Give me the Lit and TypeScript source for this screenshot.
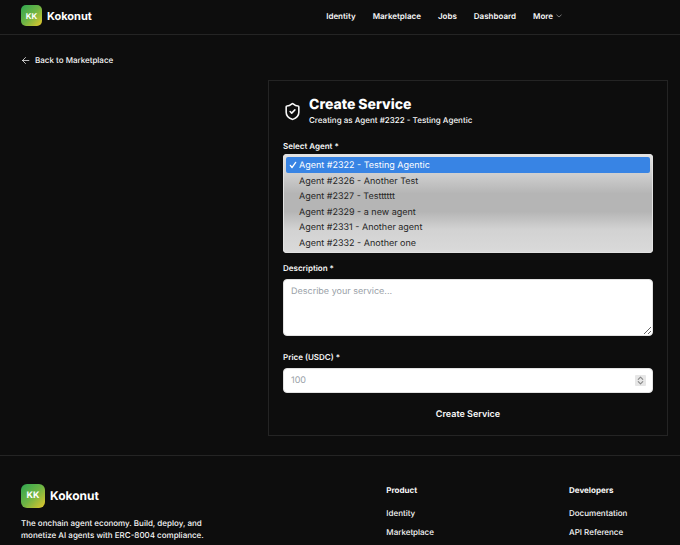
import { LitElement, html, css, svg } from "lit";
import { customElement, property, state } from "lit/decorators.js";

const AGENTS = [
  { id: 2322, name: "Testing Agentic" },
  { id: 2326, name: "Another Test" },
  { id: 2327, name: "Testttttt" },
  { id: 2329, name: "a new agent" },
  { id: 2331, name: "Another agent" },
  { id: 2332, name: "Another one" },
];

const NAV = ["Identity", "Marketplace", "Jobs", "Dashboard"];

const FOOTER_GROUPS = [
  { title: "Product", links: ["Identity", "Marketplace"] },
  { title: "Developers", links: ["Documentation", "API Reference"] },
];

const stroke = (size: number, width: number, body: unknown) => html`<svg
  width=${size}
  height=${size}
  viewBox="0 0 24 24"
  fill="none"
  stroke="currentColor"
  stroke-width=${width}
  stroke-linecap="round"
  stroke-linejoin="round"
  aria-hidden="true"
>
  ${body}
</svg>`;

const arrowLeft = svg`<path d="m12 20-8-8 8-8"/><path d="M21 12H4"/>`;
const chevronDown = svg`<path d="m3 8 9 8 9-8"/>`;
const shieldCheck = svg`<path d="M20 13c0 5-3.5 7.5-7.66 8.95a1 1 0 0 1-.67-.01C7.5 20.5 4 18 4 13V6a1 1 0 0 1 1-1c2 0 4.5-1.2 6.24-2.72a1.17 1.17 0 0 1 1.52 0C14.51 3.81 17 5 19 5a1 1 0 0 1 1 1z"/><path d="m9 12 2 2 4-4"/>`;
const check = svg`<path d="m4 13 5 7L20 4"/>`;
const stepper = svg`<path d="m6 9 6-6 6 6"/><path d="m6 15 6 6 6-6"/>`;

@customElement("kk-brand")
export class KkBrand extends LitElement {
  @property({ type: Boolean, reflect: true }) large = false;

  static styles = css`
    :host {
      display: block;
    }
    .brand {
      display: inline-flex;
      align-items: center;
      gap: 5px;
      color: #fff;
      text-decoration: none;
      font-size: 11px;
      font-weight: 700;
      line-height: 16px;
      vertical-align: top;
    }
    .mark {
      display: grid;
      place-items: center;
      width: 21px;
      height: 21px;
      border-radius: 5px;
      background: linear-gradient(135deg, #2fa652 0%, #6fb544 50%, #e6c62c 100%);
      font-size: 8px;
      line-height: 12px;
    }
    :host([large]) .brand {
      font-size: 12px;
    }
    :host([large]) .mark {
      width: 24px;
      height: 24px;
      border-radius: 6px;
      font-size: 9px;
    }
  `;

  render() {
    return html`<a class="brand" href="#"><span class="mark">KK</span>Kokonut</a>`;
  }
}

@customElement("app-root")
export class AppRoot extends LitElement {
  @state() private agentId = 2322;

  static styles = css`
    :host {
      display: block;
      min-height: 100vh;
      background: #0d0d0d;
      color: #f8f8f8;
      font-family: Inter, "Liberation Sans", sans-serif;
      font-size: 8px;
      font-weight: 500;
      line-height: 12px;
      text-rendering: geometricPrecision;
    }
    * {
      box-sizing: border-box;
    }
    a {
      color: inherit;
      text-decoration: none;
    }
    svg {
      display: block;
      flex: none;
    }
    .header {
      display: flex;
      align-items: center;
      justify-content: space-between;
      padding: 5px 118px 8px 21px;
      border-bottom: 1px solid #242424;
    }
    .nav {
      display: flex;
      gap: 17px;
    }
    .nav,
    .label {
      font-weight: 600;
    }
    .more {
      display: flex;
      align-items: center;
      gap: 3px;
      padding: 0;
      border: 0;
      background: none;
      color: inherit;
      font: inherit;
      text-rendering: inherit;
    }
    .more svg {
      color: #999;
    }
    .main {
      padding: 19px 12px 19px 21px;
    }
    .back {
      display: inline-flex;
      align-items: center;
      gap: 5px;
      vertical-align: top;
    }
    .card {
      margin: 14px 0 0 247px;
      padding: 15px 14px 9px;
      border: 1px solid #242424;
    }
    .intro {
      display: flex;
      align-items: center;
      gap: 7px;
      margin-bottom: 14px;
    }
    .title {
      margin: 0;
      color: #fff;
      font-size: 14px;
      font-weight: 800;
      line-height: 18px;
    }
    .subtitle {
      margin: 0;
    }
    .field {
      position: relative;
      margin-bottom: 9px;
    }
    .field.roomy {
      margin-bottom: 15px;
    }
    .label {
      display: block;
      margin-bottom: 5px;
    }
    .label.tight {
      margin-bottom: 2px;
    }
    .agents {
      display: block;
      width: 100%;
      height: 99px;
      padding: 3px;
      overflow: hidden;
      border: 0;
      border-radius: 4px;
      outline: 0;
      background: linear-gradient(#e4e4e4 0%, #cfcfcf 20%, #b5b5b5 40%, #b5b5b5 58%, #d2d2d2 76%, #dadada 100%);
      box-shadow: inset 0 0 0 1px #e2e2e2;
      font: 500 9px/15px Inter, "Liberation Sans", sans-serif;
      text-rendering: inherit;
    }
    .agents option {
      height: 15px;
      min-height: 0;
      padding: 3px 0 0 13px;
      color: #262626;
    }
    .agents option:nth-child(odd) {
      height: 16px;
    }
    .agents option:checked {
      border-radius: 2px;
      background: linear-gradient(#3884e4, #3884e4);
      -webkit-text-fill-color: #fff;
    }
    .tick {
      position: absolute;
      top: 21px;
      left: 6px;
      color: #fff;
      pointer-events: none;
    }
    .input {
      display: block;
      width: 100%;
      border: 1px solid #e2e2e2;
      border-radius: 4px;
      outline: 0;
      background: #fff;
      color: #111;
      font: 9px/15px Inter, "Liberation Sans", sans-serif;
      text-rendering: inherit;
    }
    .input::placeholder {
      color: #9a9fa8;
      opacity: 1;
    }
    .description {
      height: 57px;
      padding: 4px 7px;
      resize: vertical;
    }
    .price {
      height: 25px;
      padding: 4px 7px;
      appearance: textfield;
    }
    .stepper {
      position: absolute;
      right: 7px;
      bottom: 7px;
      display: grid;
      place-items: center;
      width: 11px;
      height: 11px;
      border-radius: 1px;
      background: #e6e6e6;
      color: #888;
      pointer-events: none;
    }
    .submit {
      display: block;
      width: 100%;
      height: 24px;
      padding: 0;
      border: 0;
      background: none;
      color: inherit;
      font: 600 9px/15px Inter, "Liberation Sans", sans-serif;
      text-rendering: inherit;
    }
    .footer {
      display: grid;
      grid-template-columns: minmax(0, 2fr) minmax(0, 1fr) 111px;
      padding: 28px 0 0 21px;
      border-top: 1px solid #242424;
    }
    .pitch {
      max-width: 200px;
      margin: 9px 0 0;
    }
    .heading {
      margin: 0 0 11px;
      font-size: 8px;
      font-weight: 700;
      line-height: 12px;
    }
    .links {
      display: grid;
      gap: 7px;
      margin: 0;
      padding: 0;
      list-style: none;
    }
  `;

  private pickAgent(e: Event) {
    this.agentId = Number((e.target as HTMLSelectElement).value);
  }

  render() {
    const row = AGENTS.findIndex((a) => a.id === this.agentId);
    const agent = AGENTS[row];
    return html`
      <header class="header">
        <kk-brand></kk-brand>
        <nav class="nav" aria-label="Main">
          ${NAV.map((item) => html`<a href="#">${item}</a>`)}
          <button class="more" type="button">More ${stroke(6, 3, chevronDown)}</button>
        </nav>
      </header>

      <main class="main">
        <a class="back" href="#">${stroke(9, 2, arrowLeft)}Back to Marketplace</a>
        <form class="card" @submit=${(e: Event) => e.preventDefault()}>
          <div class="intro">
            ${stroke(19, 2, shieldCheck)}
            <div>
              <h1 class="title">Create Service</h1>
              <p class="subtitle">Creating as Agent #${agent.id} - ${agent.name}</p>
            </div>
          </div>

          <div class="field">
            <label class="label tight" for="agent">Select Agent *</label>
            <select class="agents" id="agent" size="6" @change=${this.pickAgent}>
              ${AGENTS.map(
                (a) => html`<option value=${a.id} ?selected=${a.id === this.agentId}>Agent #${a.id} - ${a.name}</option>`
              )}
            </select>
            ${row === 0 ? html`<span class="tick">${stroke(8, 4, check)}</span>` : null}
          </div>

          <div class="field roomy">
            <label class="label" for="description">Description *</label>
            <textarea class="input description" id="description" placeholder="Describe your service..."></textarea>
          </div>

          <div class="field">
            <label class="label" for="price">Price (USDC) *</label>
            <input class="input price" id="price" type="number" placeholder="100" />
            <span class="stepper">${stroke(9, 3, stepper)}</span>
          </div>

          <button class="submit" type="submit">Create Service</button>
        </form>
      </main>

      <footer class="footer">
        <div>
          <kk-brand large></kk-brand>
          <p class="pitch">The onchain agent economy. Build, deploy, and monetize AI agents with ERC-8004 compliance.</p>
        </div>
        ${FOOTER_GROUPS.map(
          (g) => html`<section>
            <h2 class="heading">${g.title}</h2>
            <ul class="links">
              ${g.links.map((l) => html`<li><a href="#">${l}</a></li>`)}
            </ul>
          </section>`
        )}
      </footer>
    `;
  }
}
